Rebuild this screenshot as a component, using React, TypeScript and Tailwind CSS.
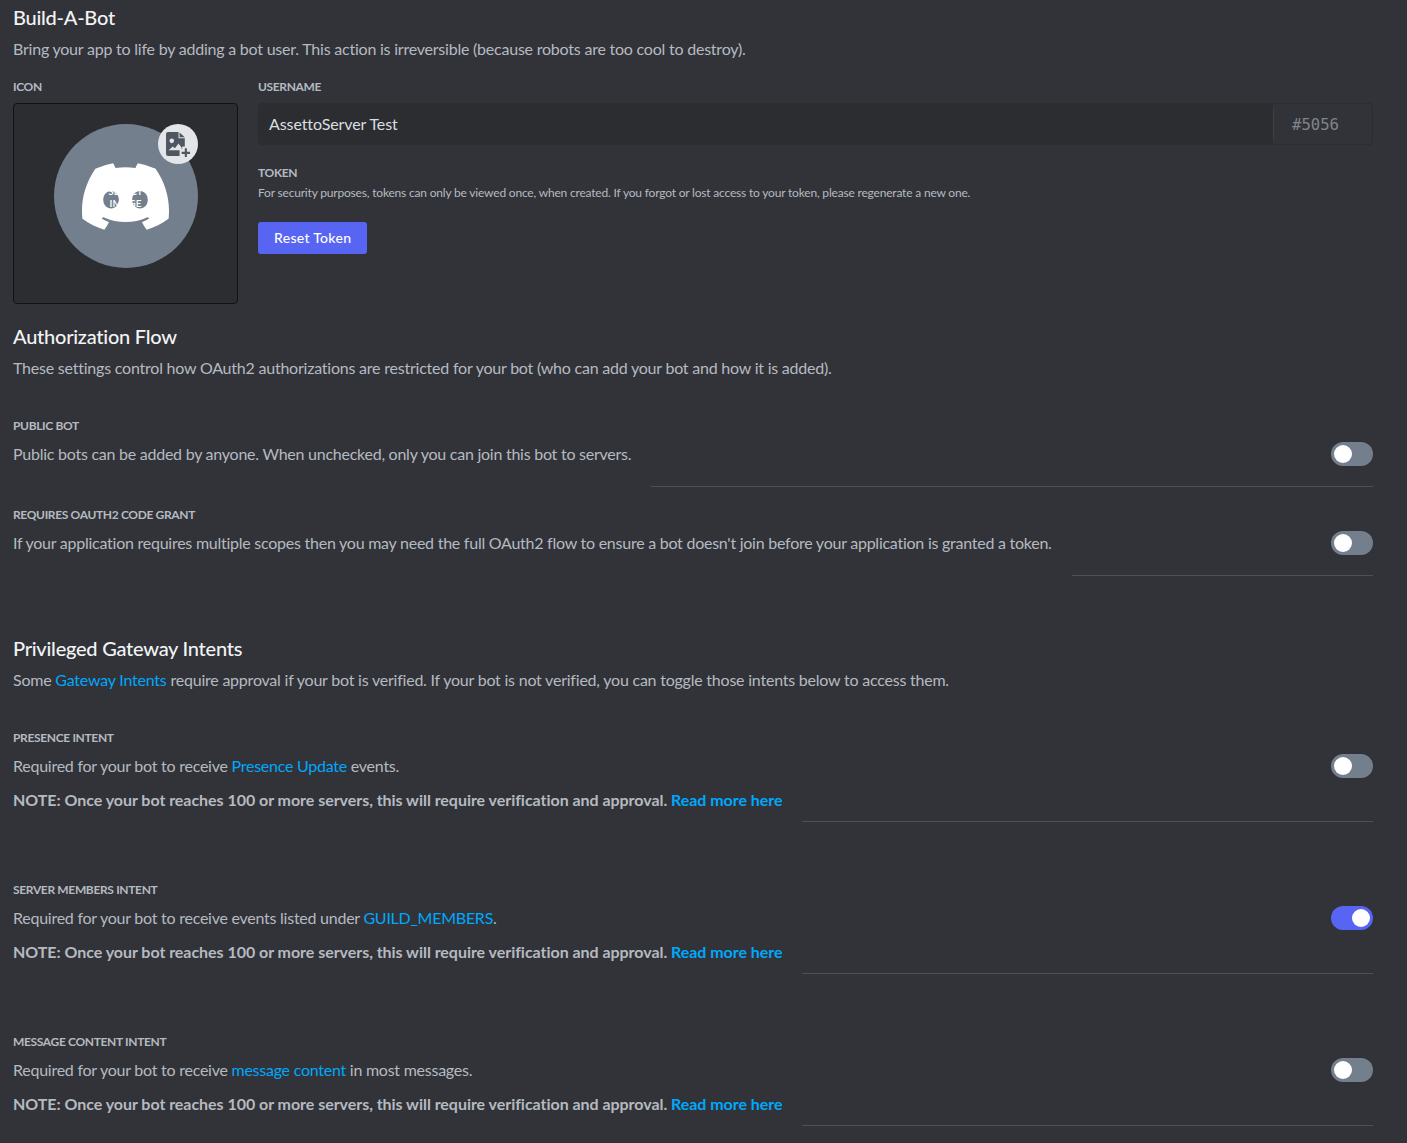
import React from 'react';
import { SiDiscord } from 'react-icons/si';

const Label = ({ children, className = '' }: { children: React.ReactNode; className?: string }) => (
  <h3 className={`text-xs font-bold leading-4 tracking-[-0.35px] text-[#b5bac1] ${className}`}>{children}</h3>
);

const A = ({ children }: { children: React.ReactNode }) => <a className="text-[#00a8fc]">{children}</a>;

const Toggle = ({ on = false }: { on?: boolean }) => (
  <div className={`flex h-6 w-[42px] shrink-0 items-center rounded-full px-[3px] ${on ? 'justify-end bg-[#5865f2]' : 'bg-[#747f8d]'}`}>
    <div className="h-[18px] w-[18px] rounded-full bg-white" />
  </div>
);

const Note = () => (
  <p className="mt-[14px] text-base font-bold leading-5 tracking-[-0.04px] text-[#b5bac1]">
    NOTE: Once your bot reaches 100 or more servers, this will require verification and approval.{' '}
    <A>Read more here</A>
  </p>
);

const Row = ({ label, children, note, on, className = '' }: { label: string; children: React.ReactNode; note?: boolean; on?: boolean; className?: string }) => (
  <div className={`flex ${className}`}>
    <div className="mr-5 shrink-0">
      <Label className="pt-px">{label}</Label>
      <p className="mt-[10px] text-base leading-5 tracking-[-0.25px] text-[#b5bac1]">{children}</p>
      {note && <Note />}
      <div className={note ? 'h-[12px]' : 'h-[23px]'} />
    </div>
    <div className="flex flex-1 flex-col items-end border-b border-[#4e5058]">
      <div className="mt-[25px]">
        <Toggle on={on} />
      </div>
    </div>
  </div>
);

const Heading = ({ title, children, className = '' }: { title: string; children: React.ReactNode; className?: string }) => (
  <div className={className}>
    <h2 className="text-xl font-medium leading-[22px] tracking-[-0.25px] text-[#f2f3f5]">{title}</h2>
    <p className="mt-[9px] text-base leading-6 tracking-[-0.22px] text-[#b5bac1]">{children}</p>
  </div>
);

export default function App() {
  return (
    <div className="h-[1143px] overflow-hidden bg-[#313338] pl-[13px] pr-[34px] pt-[6px] font-['Lato',sans-serif]">
      <Heading title="Build-A-Bot">
        Bring your app to life by adding a bot user. This action is irreversible (because robots are too cool to destroy).
      </Heading>

      <div className="mt-[18px] flex gap-5">
        <div className="w-[225px] shrink-0">
          <Label>ICON</Label>
          <div className="mt-2 flex h-[201px] justify-center rounded border border-[#111214] bg-[#2b2d31] pt-5">
            <div className="relative flex h-36 w-36 items-center justify-center rounded-full bg-[#747f8d]">
              <SiDiscord className="h-[87px] w-[87px] text-white" />
              <div className="absolute left-0 top-[61px] w-full text-center text-[10px] font-semibold leading-3 text-white">
                SELECT<br />IMAGE
              </div>
              <div className="absolute right-0 top-0 flex h-10 w-10 items-center justify-center rounded-full bg-[#e3e5e8]">
                <svg width="25" height="25" viewBox="0 0 24 24" fill="#4f5660">
                  <path d="M1 2a2 2 0 0 1 2-2h10v6h6v8h-2.5v2.5H14V23H3a2 2 0 0 1-2-2V2Z" />
                  <path d="M14 0.5l5 4.5h-5Z" />
                  <circle cx="6.5" cy="8.5" r="2.2" fill="#e3e5e8" />
                  <path d="M3.5 17.5l4-3.5 2 1.5 3.5-4.5 3 4v2.5H3.5Z" fill="#e3e5e8" />
                  <path d="M19 15.5h2V19h3v2h-3v3h-2v-3h-3v-2h3v-3.5Z" />
                </svg>
              </div>
            </div>
          </div>
        </div>

        <div className="flex-1">
          <Label>USERNAME</Label>
          <div className="mt-2 flex h-[42px] items-center rounded-[3px] border border-[#2b2d31] bg-[#2b2d31]">
            <span className="flex-1 pl-[10px] text-base tracking-[-0.1px] text-[#dbdee1]">AssettoServer Test</span>
            <div className="flex h-full w-[99px] items-center rounded-r-[3px] bg-[#313338]">
              <div className="h-[30px] w-px bg-[#3f4147]" />
              <span className="pl-[18px] pt-1 font-['DejaVu_Sans_Mono',monospace] text-[15.6px] text-[#80848e]">#5056</span>
            </div>
          </div>
          <Label className="mt-5">TOKEN</Label>
          <p className="mt-1 text-xs leading-4 tracking-[-0.19px] text-[#b5bac1]">
            For security purposes, tokens can only be viewed once, when created. If you forgot or lost access to your token, please regenerate a new one.
          </p>
          <button className="mt-[21px] block h-8 rounded-[3px] bg-[#5865f2] px-4 text-sm font-medium tracking-[0.3px] text-white">Reset Token</button>
        </div>
      </div>

      <Heading title="Authorization Flow" className="mt-[21px]">
        These settings control how OAuth2 authorizations are restricted for your bot (who can add your bot and how it is added).
      </Heading>
      <Row label="PUBLIC BOT" className="mt-[37px]">
        Public bots can be added by anyone. When unchecked, only you can join this bot to servers.
      </Row>
      <Row label="REQUIRES OAUTH2 CODE GRANT" className="mt-[19px]">
        If your application requires multiple scopes then you may need the full OAuth2 flow to ensure a bot doesn't join before your application is granted a token.
      </Row>

      <Heading title="Privileged Gateway Intents" className="mt-[61px]">
        Some <A>Gateway Intents</A> require approval if your bot is verified. If your bot is not verified, you can toggle those intents below to access them.
      </Heading>
      <Row label="PRESENCE INTENT" note className="mt-[37px]">
        Required for your bot to receive <A>Presence Update</A> events.
      </Row>
      <Row label="SERVER MEMBERS INTENT" note on className="mt-[59px]">
        Required for your bot to receive events listed under <A>GUILD_MEMBERS</A>.
      </Row>
      <Row label="MESSAGE CONTENT INTENT" note className="mt-[59px]">
        Required for your bot to receive <A>message content</A> in most messages.
      </Row>
    </div>
  );
}
